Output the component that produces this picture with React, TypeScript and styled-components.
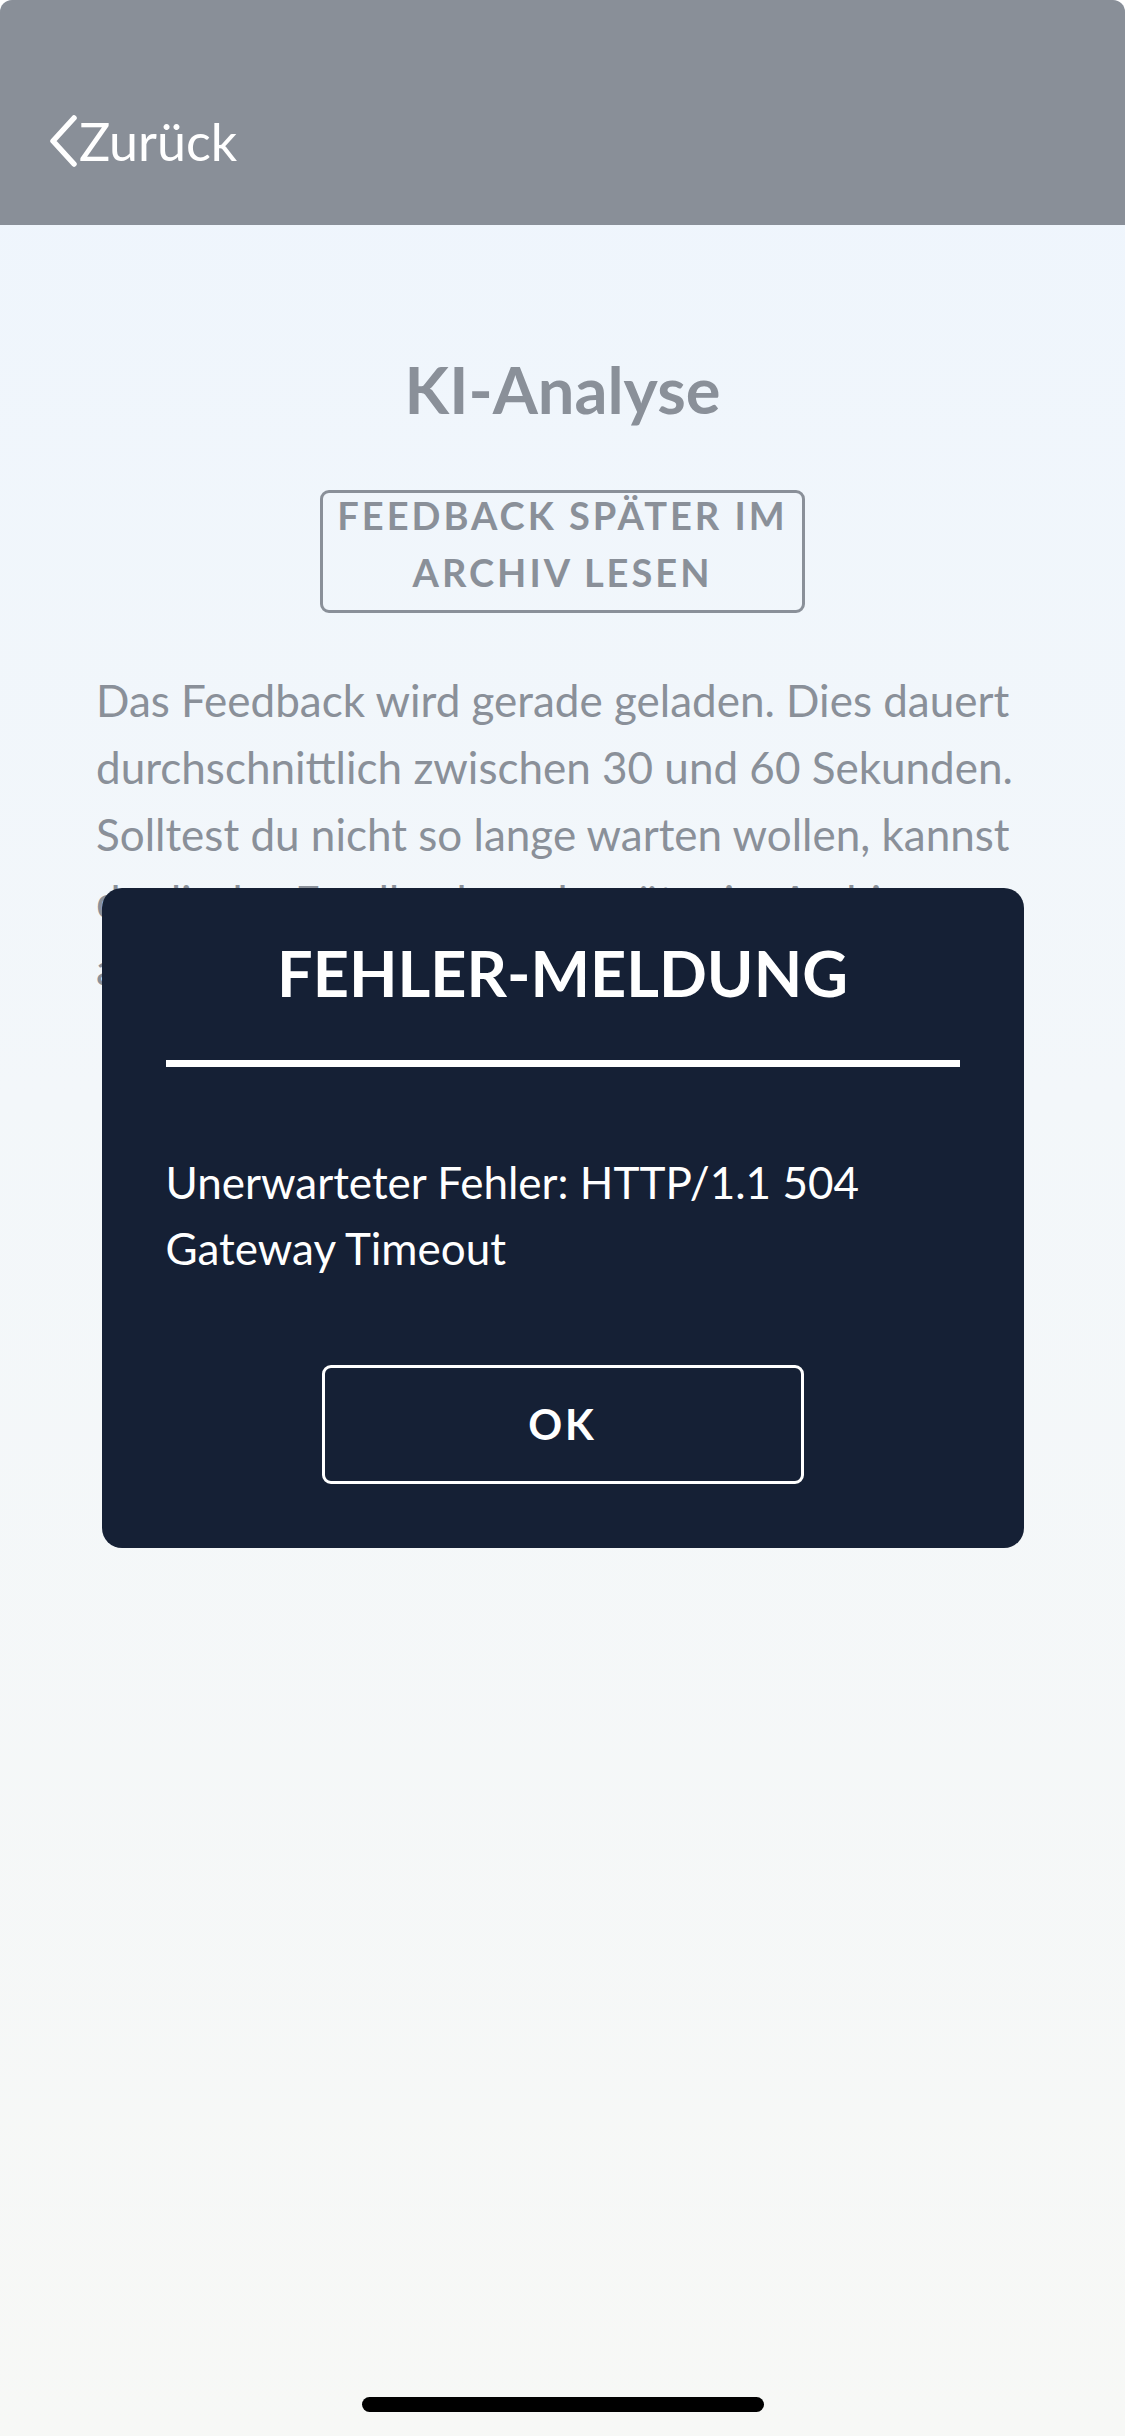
import React from "react";
import styled, { createGlobalStyle } from "styled-components";

const GlobalStyle = createGlobalStyle`
  html, body {
    margin: 0;
    padding: 0;
    background: #ffffff;
  }
  body {
    font-family: Lato, "Noto Sans", "Liberation Sans", sans-serif;
    -webkit-font-smoothing: antialiased;
  }
  * { box-sizing: border-box; }
`;

const Page = styled.div`
  position: relative;
  width: 1125px;
  min-height: 2436px;
  display: flex;
  flex-direction: column;
  background: linear-gradient(180deg, #eef5fd 0%, #f3f7fa 45%, #f7f8f6 100%);
  border-radius: 12px 12px 0 0;
  overflow: hidden;
`;

const Header = styled.header`
  height: 225px;
  background: #898f98;
  display: flex;
  align-items: flex-end;
  padding: 0 0 58px 47px;
`;

const BackButton = styled.button`
  display: flex;
  align-items: center;
  gap: 0;
  background: none;
  border: none;
  padding: 0;
  color: #ffffff;
  font-family: Lato, "Noto Sans", sans-serif;
  font-size: 52px;
  font-weight: 400;
  line-height: 1;
  cursor: pointer;
`;

const Content = styled.main`
  flex: 1;
  display: flex;
  flex-direction: column;
  align-items: center;
  padding: 125px 96px 0;
`;

const Title = styled.h1`
  margin: 0;
  font-size: 65px;
  line-height: 1.2;
  font-weight: 700;
  color: #8a9099;
`;

const OutlineButton = styled.button<{ $tone: "muted" | "light"; $size: number }>`
  margin-top: ${(p) => (p.$tone === "muted" ? "62px" : "0")};
  width: ${(p) => (p.$tone === "muted" ? "485px" : "482px")};
  height: ${(p) => (p.$tone === "muted" ? "123px" : "119px")};
  border: 3px solid ${(p) => (p.$tone === "muted" ? "#8a9099" : "#ffffff")};
  border-radius: 9px;
  background: transparent;
  color: ${(p) => (p.$tone === "muted" ? "#8a9099" : "#ffffff")};
  font-family: Lato, "Noto Sans", sans-serif;
  font-size: ${(p) => p.$size}px;
  font-weight: 700;
  letter-spacing: 3px;
  line-height: 57px;
  text-transform: uppercase;
  display: flex;
  align-items: center;
  justify-content: center;
  text-align: center;
  padding: 0 0 ${(p) => (p.$tone === "muted" ? "15px" : "0")};
`;

const Paragraph = styled.p`
  margin: 54px 0 0;
  font-size: 44px;
  line-height: 67px;
  color: #8a9099;
  font-weight: 400;
  align-self: stretch;
`;

const HomeBar = styled.div`
  width: 402px;
  height: 15px;
  border-radius: 8px;
  background: #000000;
  align-self: center;
  margin: 0 0 24px;
`;

const Overlay = styled.div`
  position: absolute;
  inset: 0;
  display: flex;
  align-items: center;
  justify-content: center;
`;

const Dialog = styled.div`
  width: 922px;
  height: 660px;
  background: #152035;
  border-radius: 20px;
  padding: 47px 64px 64px;
  display: flex;
  flex-direction: column;
  color: #ffffff;
`;

const DialogTitle = styled.h2`
  margin: 0;
  text-align: center;
  font-size: 63px;
  line-height: 1.2;
  font-weight: 700;
`;

const Divider = styled.hr`
  margin: 49px 0 0;
  border: none;
  height: 7px;
  background: #ffffff;
`;

const Message = styled.p`
  margin: 82px 0 0;
  font-size: 44px;
  line-height: 66px;
  font-weight: 400;
`;

const DialogActions = styled.div`
  margin-top: auto;
  display: flex;
  justify-content: center;
`;

const Chevron = () => (
  <svg width="32" height="52" viewBox="0 0 32 52" fill="none" aria-hidden="true">
    <path
      d="M27 3 L6 26 L27 49"
      stroke="#ffffff"
      strokeWidth="5.5"
      strokeLinecap="round"
      strokeLinejoin="round"
    />
  </svg>
);

export default function App() {
  return (
    <>
      <GlobalStyle />
      <Page>
        <Header>
          <BackButton>
            <Chevron />
            <span>Zurück</span>
          </BackButton>
        </Header>
        <Content>
          <Title>KI-Analyse</Title>
          <OutlineButton $tone="muted" $size={38}>
            Feedback später im
            <br />
            Archiv lesen
          </OutlineButton>
          <Paragraph>
            Das Feedback wird gerade geladen. Dies dauert durchschnittlich zwischen 30 und 60 Sekunden.
            Solltest du nicht so lange warten wollen, kannst du dir das Feedback auch später im Archiv
            anschauen.
          </Paragraph>
        </Content>
        <HomeBar />
        <Overlay>
          <Dialog role="alertdialog">
            <DialogTitle>FEHLER-MELDUNG</DialogTitle>
            <Divider />
            <Message>Unerwarteter Fehler: HTTP/1.1 504 Gateway Timeout</Message>
            <DialogActions>
              <OutlineButton $tone="light" $size={42}>
                OK
              </OutlineButton>
            </DialogActions>
          </Dialog>
        </Overlay>
      </Page>
    </>
  );
}
